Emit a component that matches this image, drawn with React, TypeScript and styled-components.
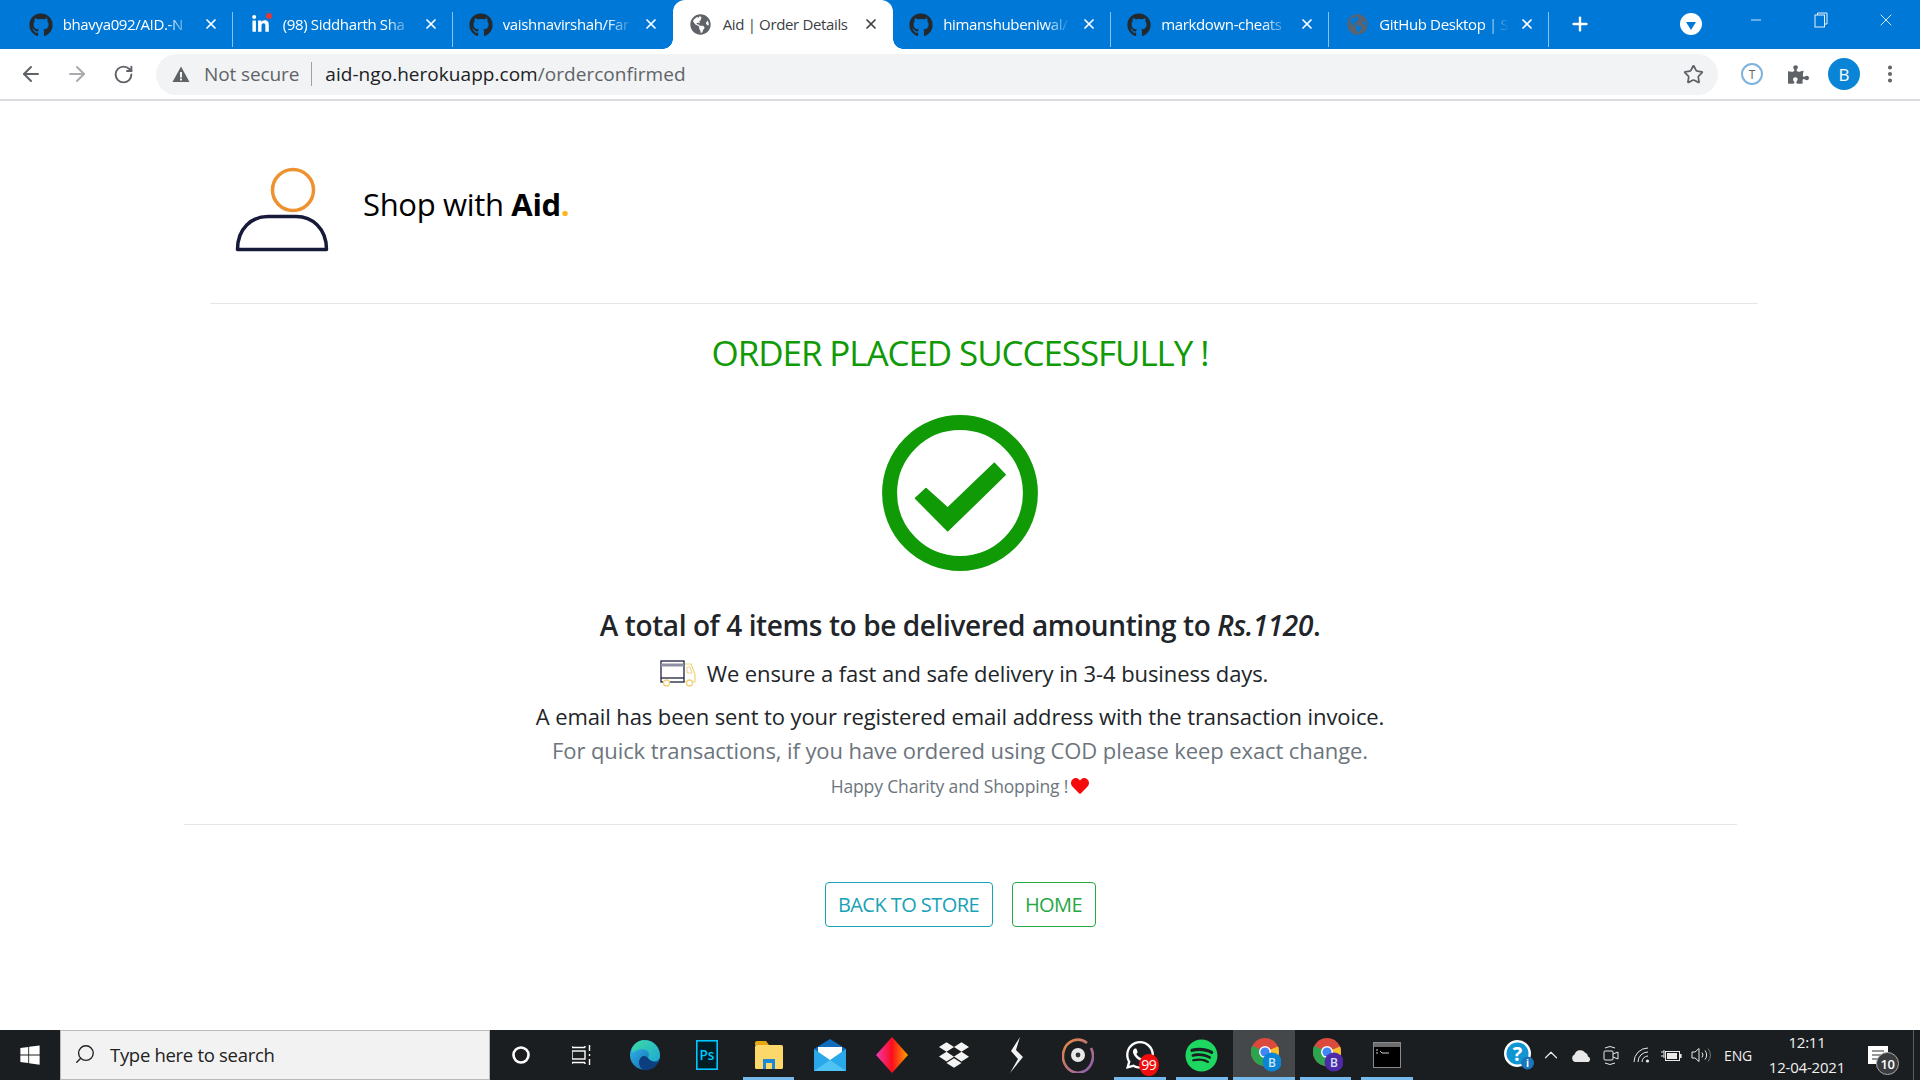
import React from "react";
import styled, { createGlobalStyle } from "styled-components";
import { FaGithub, FaGlobeAmericas, FaLinkedinIn, FaWindows, FaDropbox, FaSpotify, FaPuzzlePiece, FaWhatsapp, FaHeart } from "react-icons/fa";
import { ArrowLeft, ArrowRight, RotateCw, Star, X, Plus, Minus, Search, ChevronUp, EllipsisVertical } from "lucide-react";

const Global = createGlobalStyle`
  html, body { margin: 0; padding: 0; height: 100%; overflow: hidden; background: #fff; }
  body { font-family: "Open Sans", "Liberation Sans", sans-serif; }
  * { box-sizing: border-box; }
`;

const Screen = styled.div`
  width: 1920px; height: 1080px; display: flex; flex-direction: column; overflow: hidden;
`;

/* ---------- browser chrome ---------- */
const TabStrip = styled.div`
  height: 49px; flex: none; background: #0078d7; display: flex; align-items: stretch; padding-left: 12.7px; color: #fff;
`;
const Tab = styled.div<{ $active?: boolean; $sep?: boolean; $w: number }>`
  width: ${(p) => p.$w}px; flex: none; position: relative; display: flex; align-items: center; padding: 0 14px 0 16px; gap: 10px;
  background: ${(p) => (p.$active ? "#fff" : "transparent")};
  color: ${(p) => (p.$active ? "#3c4043" : "#fff")};
  border-radius: ${(p) => (p.$active ? "12px 12px 0 0" : "0")};
  &::after {
    content: ""; position: absolute; right: 0; top: 12px; height: 35px; width: 1px;
    background: ${(p) => (p.$sep ? "rgba(255,255,255,.55)" : "transparent")};
  }
`;
const Ear = styled.span<{ $side: "left" | "right" }>`
  position: absolute; bottom: 0; width: 10px; height: 10px;
  ${(p) => (p.$side === "left" ? "left: -10px;" : "right: -10px;")}
  background: radial-gradient(circle at ${(p) => (p.$side === "left" ? "0 0" : "100% 0")}, transparent 9.5px, #fff 10px);
`;
const TabIcon = styled.span<{ $color?: string }>`
  width: 24px; height: 24px; flex: none; display: flex; align-items: center; justify-content: center; position: relative;
  color: ${(p) => p.$color || "#24292e"}; font-size: 24px;
`;
const LinkedDot = styled.span`
  position: absolute; top: 0; right: 1px; width: 6px; height: 6px; border-radius: 50%; background: #e0383a;
`;
const TabTitle = styled.span<{ $fade?: boolean }>`
  flex: 1; min-width: 0; white-space: nowrap; font-size: 15px; letter-spacing: -0.35px; margin-top: -2px;
  ${(p) => (p.$fade ? "mask-image: linear-gradient(90deg,#000 80%,transparent 100%);" : "")}
`;
const TabClose = styled.span`
  flex: none; width: 16px; height: 16px; margin-top: -2px; display: flex; align-items: center; justify-content: center;
`;
const NewTab = styled.span`
  width: 24px; height: 24px; margin: 12px 0 0 19px; display: flex; align-items: center; justify-content: center;
`;
const WindowControls = styled.div`
  margin-left: auto; display: flex; align-items: flex-start; padding-right: 2px;
`;
const ProfileDrop = styled.span`
  width: 22px; height: 22px; margin: 13px 21px 0 0; border-radius: 50%; background: #fff; display: flex; align-items: center; justify-content: center;
`;
const Triangle = styled.span`
  width: 0; height: 0; border-left: 5px solid transparent; border-right: 5px solid transparent; border-top: 8px solid #0078d7; margin-top: 3px;
`;
const WinButton = styled.span`
  width: 65px; height: 40px; display: flex; align-items: center; justify-content: center; color: #eaf4fd;
`;

const Toolbar = styled.div`
  height: 52px; flex: none; display: flex; align-items: center; background: #fff; border-bottom: 2px solid #dadce0;
`;
const NavButton = styled.span<{ $dim?: boolean }>`
  width: 46px; height: 40px; flex: none; display: flex; align-items: center; justify-content: center;
  color: ${(p) => (p.$dim ? "#a8abaf" : "#5f6368")};
`;
const NavGroup = styled.div`
  display: flex; padding-left: 8px; width: 156px; flex: none;
`;
const Omnibox = styled.div`
  width: 1562px; height: 41px; flex: none; background: #f1f3f4; border-radius: 21px; display: flex; align-items: center; padding: 0 12px 0 16px;
  font-size: 19px; color: #202124; letter-spacing: 0.04px;
`;
const NotSecure = styled.span`
  color: #5f6368; margin-left: 14px; padding-right: 12px; margin-right: 13px; line-height: 24px; border-right: 1px solid #9aa0a6; letter-spacing: -0.1px;
`;
const UrlTail = styled.span` color: #5f6368; `;
const ExtGroup = styled.div`
  display: flex; align-items: center; margin-left: 11px;
`;
const ExtSlot = styled.span`
  width: 46px; height: 36px; display: flex; align-items: center; justify-content: center; color: #5f6368;
`;
const Avatar = styled.span`
  width: 32px; height: 32px; border-radius: 50%; background: #0a84d6; color: #fff; font-size: 17px; display: flex; align-items: center; justify-content: center;
`;

/* ---------- page ---------- */
const Main = styled.main`
  flex: 1; min-height: 0; display: flex; flex-direction: column; align-items: center; color: #212529; background: #fff;
`;
const Brand = styled.header`
  width: 1548px; height: 203px; margin-left: 48px; flex: none; display: flex; align-items: flex-start; padding: 65px 0 0 25px; border-bottom: 1px solid #e4e6e8;
`;
const BrandName = styled.h1`
  margin: 18px 0 0 34px; font-size: 31px; line-height: 40px; font-weight: 400; color: #000; letter-spacing: -0.33px;
  b { font-weight: 700; }
  i { font-style: normal; font-weight: 700; color: #fdb614; }
`;
const Title = styled.h2`
  margin: 25px 0 0; font-size: 35px; line-height: 48px; font-weight: 400; color: #109a05; letter-spacing: -1.1px;
`;
const CheckWrap = styled.div`
  margin-top: 38px; width: 156px; height: 156px; flex: none;
`;
const Total = styled.h3`
  margin: 34px 0 0; font-size: 28px; line-height: 40px; font-weight: 600; letter-spacing: -0.4px;
  em { font-style: italic; }
`;
const Line = styled.p<{ $muted?: boolean; $top: number }>`
  margin: ${(p) => p.$top}px 0 0; font-size: 22px; line-height: 32px; display: flex; align-items: center; letter-spacing: -0.1px;
  color: ${(p) => (p.$muted ? "#6c757d" : "#212529")};
`;
const TruckBox = styled.span`
  width: 37px; height: 27px; margin: 0 10px 0 8px; flex: none; display: flex;
`;
const Small = styled.p`
  margin: 4px 0 0; font-size: 17.5px; line-height: 32px; color: #6c757d; display: flex; align-items: center; letter-spacing: -0.15px;
`;
const HeartMark = styled.span`
  color: #f60b0b; font-size: 18px; display: flex; margin-left: 3px;
`;
const Divider = styled.hr`
  width: 1553px; margin: 22px 0 0; border: 0; border-top: 1px solid #e4e6e8; flex: none;
`;
const Actions = styled.div`
  display: flex; gap: 19px; margin-top: 57px;
`;
const OutlineButton = styled.a<{ $color: string; $w: number }>`
  width: ${(p) => p.$w}px; height: 45px; border: 1px solid ${(p) => p.$color}; color: ${(p) => p.$color}; border-radius: 4px;
  font-size: 20px; display: flex; align-items: center; justify-content: center; letter-spacing: -0.55px; background: #fff;
`;

/* ---------- taskbar ---------- */
const Taskbar = styled.footer`
  height: 50px; flex: none; background: #1b1e20; display: flex; color: #fff;
`;
const StartBtn = styled.span`
  width: 60px; flex: none; display: flex; align-items: center; justify-content: center; font-size: 22px;
`;
const SearchBox = styled.div`
  width: 430px; flex: none; background: #f2f2f2; border: 1px solid #b8b8b8; display: flex; align-items: center; padding: 0 0 2px 13px; color: #222;
  font-size: 18.5px; gap: 14px; letter-spacing: -0.3px;
`;
const Apps = styled.div` display: flex; flex: none; `;
const AppSlot = styled.span<{ $running?: boolean; $active?: boolean }>`
  width: 61.9px; height: 50px; flex: none; position: relative; display: flex; align-items: center; justify-content: center;
  background: ${(p) => (p.$active ? "#45484b" : "transparent")};
  &::after {
    content: ""; position: absolute; bottom: 0; height: 3px; background: #76b9ed;
    left: ${(p) => (p.$active ? "0" : "5px")}; right: ${(p) => (p.$active ? "0" : "5px")};
    display: ${(p) => (p.$running ? "block" : "none")};
  }
`;
const Badge = styled.span`
  position: absolute; right: 12px; bottom: 4px; width: 20px; height: 22px; border-radius: 50%; background: #f10d0d; color: #fff;
  font-size: 14px; display: flex; align-items: center; justify-content: center; letter-spacing: -0.5px; line-height: 1;
`;
const Tray = styled.div`
  margin-left: auto; display: flex; align-items: center; height: 100%; padding-right: 6px; position: relative;
`;
const TraySlot = styled.span<{ $w?: number }>`
  width: ${(p) => p.$w || 30}px; height: 50px; flex: none; display: flex; align-items: center; justify-content: center; color: #e8e8e8; position: relative;
`;
const Lang = styled.span`
  width: 44px; font-size: 14px; text-align: center; color: #f0f0f0; letter-spacing: -0.2px;
`;
const Clock = styled.span`
  width: 94px; font-size: 15px; line-height: 25px; text-align: center; color: #f0f0f0; display: flex; flex-direction: column; letter-spacing: -0.2px;
`;
const NotifWrap = styled.span`
  width: 50px; margin: 0 7px 0 2px; padding-right: 6px; height: 50px; display: flex; align-items: center; justify-content: center; position: relative;
`;
const NotifBadge = styled.span`
  position: absolute; left: 20px; top: 22px; width: 23px; height: 23px; border-radius: 50%; background: #3a3c3e; border: 1px solid #aaa; color: #fff;
  font-size: 13px; font-weight: 600; display: flex; align-items: center; justify-content: center; letter-spacing: -0.5px;
`;
const EdgeLine = styled.span`
  width: 1px; height: 50px; background: #5a5c5e; flex: none;
`;

/* ---------- drawings ---------- */
const PersonLogo = () => (
  <svg width="94" height="88" viewBox="0 0 94 88" fill="none">
    <circle cx="58" cy="24" r="20.5" stroke="#ee9231" strokeWidth="3.5" />
    <path d="M2.5 83.5 C2.5 62 17 50.5 33 50.5 H61 C77 50.5 91.5 62 91.5 83.5 Z" stroke="#16193a" strokeWidth="3.5" strokeLinejoin="round" />
  </svg>
);
const BigCheck = () => (
  <svg width="156" height="156" viewBox="0 0 156 156" fill="none">
    <circle cx="78" cy="78" r="70.4" stroke="#109a05" strokeWidth="15" />
    <path d="M33.5 83.3 L44 73.5 L65.7 93 L112.3 48.2 L123.2 59.7 L65.7 115.8 Z" fill="#109a05" stroke="#109a05" strokeWidth="1.5" strokeLinejoin="round" />
  </svg>
);
const Truck = () => (
  <svg width="37" height="27" viewBox="0 0 37 27" fill="none">
    <path d="M24 4 H31 L35 14 V22 H24" stroke="#f2d27c" strokeWidth="1.2" />
    <path d="M27 7 H30 L32 13 H27 Z" stroke="#f2d27c" strokeWidth="1" />
    <rect x="1" y="1" width="23" height="21" stroke="#1d2040" strokeWidth="1.3" />
    <path d="M1 5 H24" stroke="#8f90a3" strokeWidth="3" />
    <path d="M1 18 H24" stroke="#1d2040" strokeWidth="1.3" />
    <circle cx="6.5" cy="23" r="3" fill="#fff" stroke="#f2d27c" strokeWidth="1.3" />
    <circle cx="29.5" cy="23" r="3" fill="#fff" stroke="#f2d27c" strokeWidth="1.3" />
  </svg>
);
const Warn = () => (
  <svg width="18" height="17" viewBox="0 0 18 17"><path d="M9 0.5 L17.5 16 H0.5 Z" fill="#5f6368" /><rect x="8" y="6" width="2" height="5.5" fill="#f1f3f4" /><rect x="8" y="12.5" width="2" height="2" fill="#f1f3f4" /></svg>
);
const TranslateExt = () => (
  <svg width="24" height="24" viewBox="0 0 24 24" fill="none">
    <circle cx="12" cy="12" r="10" stroke="#7fb3dc" strokeWidth="2" />
    <text x="12" y="16.5" textAnchor="middle" fontSize="12" fontFamily="Open Sans" fill="#5f6368">T</text>
  </svg>
);
const Restore = () => (
  <svg width="14" height="16" viewBox="0 0 14 16" fill="none" stroke="#eaf4fd"><rect x="1" y="3" width="9.5" height="12" /><path d="M3.5 3 V1 H13 V12 H10.5" /></svg>
);
const Cortana = () => (
  <svg width="20" height="20" viewBox="0 0 20 20" fill="none"><circle cx="10" cy="10" r="7.5" stroke="#fff" strokeWidth="2.6" /></svg>
);
const TaskView = () => (
  <svg width="22" height="22" viewBox="2 0 22 22" fill="none" stroke="#fff" strokeWidth="1.4">
    <rect x="2" y="7" width="13" height="8" /><path d="M2 3.5 H15 M2 18.5 H15 M19.5 1 V7 M19.5 10 V12 M19.5 15 V21 M2 2 V3.5 M15 2 V3.5 M2 18.5 V20 M15 18.5 V20" />
  </svg>
);
const Edge = () => (
  <svg width="32" height="32" viewBox="0 0 32 32">
    <defs>
      <linearGradient id="eg1" x1="0" y1="0" x2="1" y2="1"><stop offset="0" stopColor="#35c1f1" /><stop offset="1" stopColor="#0c59a4" /></linearGradient>
      <linearGradient id="eg2" x1="0" y1="0" x2="1" y2="1"><stop offset="0" stopColor="#3ddba0" /><stop offset="1" stopColor="#1fa9d8" /></linearGradient>
    </defs>
    <circle cx="16" cy="16" r="15" fill="url(#eg1)" />
    <path d="M3 10 C6 2 14 0 20 2 C27 4 31 11 31 17 C31 21 27 23 22 22 C17 21 20 17 20 15 C19 10 11 8 3 14 Z" fill="url(#eg2)" />
    <path d="M10 23 C11 17 15 16 18 18 C22 23 27 24 30 22 C27 29 20 32 15 31 C12 30 10 27 10 23 Z" fill="#0c3f80" />
  </svg>
);
const Photoshop = () => (
  <svg width="22" height="30" viewBox="0 0 22 30"><rect x="0.8" y="0.8" width="20.4" height="28.4" fill="#001d26" stroke="#00c8ff" strokeWidth="1.6" /><text x="11" y="20" textAnchor="middle" fontSize="13.5" fontWeight="600" fontFamily="Open Sans" fill="#00c8ff">Ps</text></svg>
);
const Folder = () => (
  <svg width="30" height="30" viewBox="0 0 30 30">
    <path d="M1 3 Q1 1 3 1 H12 L15 5 H1 Z" fill="#e9a70f" />
    <rect x="1" y="5" width="28" height="24" rx="1.5" fill="#fcd76a" />
    <path d="M9 29 V19 H21 V29 H18 V23 H12 V29 Z" fill="#1e88d8" />
  </svg>
);
const Mail = () => (
  <svg width="32" height="34" viewBox="0 0 32 34">
    <path d="M0 11 L16 1 L32 11 V33 H0 Z" fill="#0f6cbd" />
    <path d="M4 9 H28 V20 L16 27 L4 20 Z" fill="#fff" />
    <path d="M0 11 L16 22 L32 11 V33 H0 Z" fill="#29a8ea" />
    <path d="M0 33 L16 22 L32 33 Z" fill="#4fc4f4" />
  </svg>
);
const Diamond = () => (
  <svg width="32" height="36" viewBox="0 0 32 36">
    <defs><linearGradient id="dg" x1="0" x2="1" y1="0" y2="0"><stop offset="0" stopColor="#ef38b5" /><stop offset=".5" stopColor="#fb0d1c" /><stop offset="1" stopColor="#fda400" /></linearGradient></defs>
    <path d="M16 0 L32 18 L16 36 L0 18 Z" fill="url(#dg)" />
  </svg>
);
const Bolt = () => (
  <svg width="16" height="36" viewBox="0 0 16 36"><path d="M12 0 L3 14 L10 22 L2 36 L15 20 L8 13 Z" fill="#f2f2f2" /></svg>
);
const Vinyl = () => (
  <svg width="32" height="36" viewBox="0 0 32 36" fill="none">
    <defs><linearGradient id="vg" x1="0" y1="0" x2="1" y2="1"><stop offset="0" stopColor="#e88a3c" /><stop offset="1" stopColor="#8a5db8" /></linearGradient></defs>
    <path d="M25 6 A15 16.5 0 1 0 29 11" stroke="url(#vg)" strokeWidth="2.6" />
    <circle cx="16" cy="18" r="7" fill="#e8e8e8" />
    <circle cx="16" cy="18" r="2.4" fill="#333" />
  </svg>
);
const Chrome = ({ hub, id }: { hub: string; id: string }) => (
  <svg width="34" height="36" viewBox="-4 0 34 36">
    <clipPath id={id}><circle cx="14" cy="15" r="14" /></clipPath>
    <g clipPath={`url(#${id})`}>
      <rect width="30" height="30" fill="#dc4a3d" />
      <path d="M14 15 L0 8 V30 H14 Z" fill="#2da44e" />
      <path d="M14 15 L30 8 V30 H12 Z" fill="#fbc02d" />
    </g>
    <circle cx="14" cy="15" r="6" fill="#fff" /><circle cx="14" cy="15" r="4.6" fill="#4285f4" />
    <circle cx="21" cy="25" r="9.5" fill={hub} />
    <text x="21" y="29.5" textAnchor="middle" fontSize="12" fontFamily="Open Sans" fontWeight="600" fill="#cfe4f6">B</text>
  </svg>
);
const Terminal = () => (
  <svg width="28" height="26" viewBox="0 0 28 26">
    <rect x="0.5" y="0.5" width="27" height="25" fill="#000" stroke="#8a8a8a" />
    <rect x="1" y="1" width="26" height="4" fill="#6d6d6d" />
    <path d="M3 8 H5 M3 11 H5 M7 9 L9 11 H16" stroke="#ccc" strokeWidth="1" />
  </svg>
);
const HelpTray = () => (
  <svg width="30" height="30" viewBox="0 0 30 30">
    <circle cx="13.5" cy="13.5" r="13.5" fill="#fff" /><circle cx="13.5" cy="13.5" r="11" fill="#1296d3" />
    <text x="13.5" y="20.5" textAnchor="middle" fontSize="20" fontWeight="700" fontFamily="Open Sans" fill="#fff">?</text>
    <circle cx="23.5" cy="23" r="6.5" fill="#1976bd" />
    <text x="23.5" y="27" textAnchor="middle" fontSize="10" fontWeight="700" fontFamily="Open Sans" fill="#fff">i</text>
  </svg>
);
const Cloud = () => (
  <svg width="21" height="13" viewBox="0 0 21 13"><path d="M4 13 A4 4 0 0 1 3.5 5.5 A6 6 0 0 1 14 3.5 A4.5 4.5 0 0 1 17 7.5 A3 3 0 0 1 17.5 13 Z" fill="#e8e8e8" /></svg>
);
const CamTray = () => (
  <svg width="16" height="21" viewBox="0 0 16 21" fill="none" stroke="#e8e8e8" strokeWidth="1"><rect x="1" y="6" width="9" height="9" rx="1" /><path d="M10 9 L15 7 V14 L10 12 M2 3 Q7 0 12 3 M2 18 Q7 21 12 18" /></svg>
);
const Wifi = () => (
  <svg width="17" height="16" viewBox="0 0 17 16" fill="none" stroke="#e8e8e8" strokeWidth="1"><path d="M1 15 A14 14 0 0 1 15 1 M5 15 A10 10 0 0 1 15 5 M9 15 A6 6 0 0 1 15 9" /><circle cx="14.5" cy="14" r="1.6" fill="#e8e8e8" stroke="none" /></svg>
);
const Battery = () => (
  <svg width="21" height="14" viewBox="0 0 21 14" fill="none" stroke="#e8e8e8"><path d="M0 4 H3 M0 8 H3 M3 2 V10 " /><rect x="4.5" y="3.5" width="14" height="9" /><rect x="6" y="5" width="10" height="6" fill="#e8e8e8" stroke="none" /><rect x="19" y="6" width="1.6" height="4" fill="#e8e8e8" stroke="none" /></svg>
);
const Speaker = () => (
  <svg width="21" height="16" viewBox="0 0 21 16" fill="none" stroke="#e8e8e8"><path d="M1 5 H4 L8 1.5 V14.5 L4 11 H1 Z" /><path d="M11 5.5 A4 4 0 0 1 11 10.5 M14 3.5 A7 7 0 0 1 14 12.5" /><path d="M17 1.5 A10 10 0 0 1 17 14.5" stroke="#777" /></svg>
);
const NotifIcon = () => (
  <svg width="20" height="18" viewBox="0 0 20 18"><path d="M0 0 H20 V18 H0 Z" fill="#fff" /><path d="M4 5 H16 M4 9 H16 M4 13 H12" stroke="#333" strokeWidth="1.2" /></svg>
);

const tabs = [
  { title: "bhavya092/AID.-N", icon: "gh", w: 220, sep: true, fade: true },
  { title: "(98) Siddharth Sha", icon: "in", w: 220, sep: true, fade: true },
  { title: "vaishnavirshah/Far", icon: "gh", w: 220, fade: true },
  { title: "Aid | Order Details", icon: "globe", w: 220.5, active: true },
  { title: "himanshubeniwal/", icon: "gh", w: 218, sep: true, fade: true },
  { title: "markdown-cheats", icon: "gh", w: 218, sep: true, fade: true },
  { title: "GitHub Desktop | S", icon: "globe2", w: 219.5, sep: true, fade: true },
];

const TabGlyph = ({ kind }: { kind: string }) => {
  if (kind === "gh") return <TabIcon><FaGithub /></TabIcon>;
  if (kind === "in") return <TabIcon $color="#fff"><FaLinkedinIn size={19} /><LinkedDot /></TabIcon>;
  if (kind === "globe") return <TabIcon $color="#5f6368"><FaGlobeAmericas size={21} /></TabIcon>;
  return <TabIcon $color="#5a6470"><FaGlobeAmericas size={21} /></TabIcon>;
};

export default function App() {
  return (
    <Screen>
      <Global />
      <TabStrip>
        {tabs.map((t) => (
          <Tab key={t.title} $w={t.w} $active={t.active} $sep={t.sep}>
            {t.active && <Ear $side="left" />}
            <TabGlyph kind={t.icon} />
            <TabTitle $fade={t.fade}>{t.title}</TabTitle>
            <TabClose><X size={16} strokeWidth={2.6} /></TabClose>
            {t.active && <Ear $side="right" />}
          </Tab>
        ))}
        <NewTab><Plus size={22} strokeWidth={2.6} /></NewTab>
        <WindowControls>
          <ProfileDrop><Triangle /></ProfileDrop>
          <WinButton><Minus size={16} strokeWidth={1.3} /></WinButton>
          <WinButton><Restore /></WinButton>
          <WinButton><X size={20} strokeWidth={1.1} /></WinButton>
        </WindowControls>
      </TabStrip>

      <Toolbar>
        <NavGroup>
          <NavButton><ArrowLeft size={24} strokeWidth={2} /></NavButton>
          <NavButton $dim><ArrowRight size={24} strokeWidth={2} /></NavButton>
          <NavButton><RotateCw size={21} strokeWidth={2.2} /></NavButton>
        </NavGroup>
        <Omnibox>
          <Warn />
          <NotSecure>Not secure</NotSecure>
          <span>aid-ngo.herokuapp.com<UrlTail>/orderconfirmed</UrlTail></span>
          <Star size={21} strokeWidth={2} color="#5f6368" style={{ marginLeft: "auto", marginRight: 2 }} />
        </Omnibox>
        <ExtGroup>
          <ExtSlot><TranslateExt /></ExtSlot>
          <ExtSlot><FaPuzzlePiece size={21} /></ExtSlot>
          <ExtSlot><Avatar>B</Avatar></ExtSlot>
          <ExtSlot><EllipsisVertical size={22} strokeWidth={2.4} /></ExtSlot>
        </ExtGroup>
      </Toolbar>

      <Main>
        <Brand>
          <PersonLogo />
          <BrandName>Shop with <b>Aid</b><i>.</i></BrandName>
        </Brand>
        <Title>ORDER PLACED SUCCESSFULLY !</Title>
        <CheckWrap><BigCheck /></CheckWrap>
        <Total>A total of 4 items to be delivered amounting to <em>Rs.1120</em>.</Total>
        <Line $top={12}><TruckBox><Truck /></TruckBox>We ensure a fast and safe delivery in 3-4 business days.</Line>
        <Line $top={11}>A email has been sent to your registered email address with the transaction invoice.</Line>
        <Line $top={2} $muted>For quick transactions, if you have ordered using COD please keep exact change.</Line>
        <Small>Happy Charity and Shopping !<HeartMark><FaHeart /></HeartMark></Small>
        <Divider />
        <Actions>
          <OutlineButton $color="#17a2b8" $w={168}>BACK TO STORE</OutlineButton>
          <OutlineButton $color="#28a745" $w={84}>HOME</OutlineButton>
        </Actions>
      </Main>

      <Taskbar>
        <StartBtn><FaWindows /></StartBtn>
        <SearchBox><Search size={22} strokeWidth={1.5} style={{ transform: "scaleX(-1)" }} />Type here to search</SearchBox>
        <Apps>
          <AppSlot><Cortana /></AppSlot>
          <AppSlot><TaskView /></AppSlot>
          <AppSlot><Edge /></AppSlot>
          <AppSlot><Photoshop /></AppSlot>
          <AppSlot $running><Folder /></AppSlot>
          <AppSlot><Mail /></AppSlot>
          <AppSlot><Diamond /></AppSlot>
          <AppSlot><FaDropbox size={30} color="#f4f4f4" /></AppSlot>
          <AppSlot><Bolt /></AppSlot>
          <AppSlot><Vinyl /></AppSlot>
          <AppSlot $running><FaWhatsapp size={32} color="#fff" /><Badge>99</Badge></AppSlot>
          <AppSlot $running><FaSpotify size={33} color="#1ed760" /></AppSlot>
          <AppSlot $running $active><Chrome id="c1" hub="#0a84d6" /></AppSlot>
          <AppSlot $running><Chrome id="c2" hub="#4f2aa8" /></AppSlot>
          <AppSlot $running><Terminal /></AppSlot>
        </Apps>
        <Tray>
          <TraySlot $w={34}><HelpTray /></TraySlot>
          <TraySlot><ChevronUp size={22} strokeWidth={1.3} /></TraySlot>
          <TraySlot><Cloud /></TraySlot>
          <TraySlot><CamTray /></TraySlot>
          <TraySlot><Wifi /></TraySlot>
          <TraySlot><Battery /></TraySlot>
          <TraySlot><Speaker /></TraySlot>
          <Lang>ENG</Lang>
          <Clock><span>12:11</span><span>12-04-2021</span></Clock>
          <NotifWrap><NotifIcon /><NotifBadge>10</NotifBadge></NotifWrap>
          <EdgeLine />
        </Tray>
      </Taskbar>
    </Screen>
  );
}
